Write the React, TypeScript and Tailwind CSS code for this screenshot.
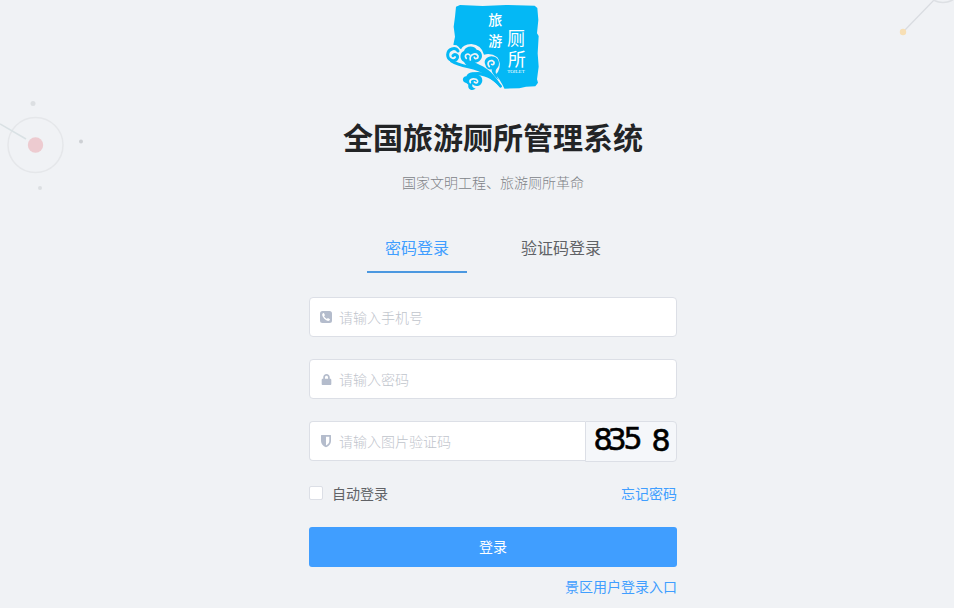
import { useState } from 'react';
import type { ReactNode } from 'react';
import { FaLock } from 'react-icons/fa';

type LoginMode = 'password' | 'code';

const TABS: { key: LoginMode; label: string }[] = [
  { key: 'password', label: '密码登录' },
  { key: 'code', label: '验证码登录' },
];

function Logo() {
  return (
    <svg viewBox="0 0 342 288" className="h-24 w-[114px]" role="img" aria-label="旅游厕所">
      <path
        fill="#04b8f5"
        d="M60 20 L72 15 L140 18 L210 15 L296 17 L304 24 L307 60 L303 100 L308 108 L305 160 L308 200 L303 238 L306 248 L298 259 L270 260 L250 265 L204 266 L150 200 L60 137 L52 134 L57 110 L53 80 L57 50 Z"
      />
      {/* gap between the seal and the clouds */}
      <path
        fill="#f0f2f5"
        d="M28 134 L62 136 Q72 142 74 150 Q80 134 106 132 Q136 134 144 164 Q166 158 184 172 Q198 190 186 216 L178 224 Q192 236 206 268 L140 282 L28 220 Z"
      />
      <g fill="#04b8f5">
        <path d="M84 186 C68 178 72 156 84 153 C88 137 114 135 122 149 C138 150 144 172 131 182 C124 190 110 188 106 182 C120 190 146 198 164 216 C180 232 192 248 196 262 C176 238 158 222 136 212 C112 204 92 202 84 186 Z" />
        <path d="M148 194 C140 176 160 164 175 170 C190 174 194 196 182 206 C177 212 178 220 188 240 C174 228 166 216 167 208 C158 210 150 204 148 194 Z" />
        <path d="M92 250 C76 246 78 230 91 229 C96 215 118 213 126 224 C144 230 142 252 128 257 C120 260 112 256 110 252 C106 260 112 264 119 265 C111 275 94 269 97 254 Z" />
        <path d="M104 220 C140 206 176 230 194 262 C172 240 152 228 128 226 Z" />
      </g>
      <g fill="none" stroke="#04b8f5" strokeLinecap="round">
        <path strokeWidth="9" d="M66 153 C58 140 36 146 35 164 C35 182 58 188 64 174 C67 165 56 160 51 167" />
        <path strokeWidth="8" d="M46 183 C80 204 118 198 146 219 C166 231 182 244 194 259" />
      </g>
      <g fill="none" stroke="#f0f2f5" strokeWidth="5" strokeLinecap="round">
        <path d="M91 175 C83 166 94 158 101 165" />
        <path d="M103 180 C99 164 119 156 126 168 C127 177 116 178 115 172" />
        <path d="M160 200 C152 190 158 180 169 182 C178 186 174 197 167 193" />
        <path d="M103 248 C99 240 108 234 120 238 C130 244 123 252 115 246" />
      </g>
      <g fill="#fff" textAnchor="middle" className="font-['Noto_Sans_CJK_SC',sans-serif]">
        <text x="178" y="74" fontSize="42" fontWeight="500">旅</text>
        <text x="178" y="138" fontSize="42" fontWeight="500">游</text>
        <text x="240" y="134" fontSize="54">厕</text>
        <text x="242" y="198" fontSize="54">所</text>
      </g>
      <text x="240" y="220" fontSize="15" fill="#fff" textAnchor="middle" className="font-['Liberation_Serif',serif]">
        TOILET
      </text>
    </svg>
  );
}

function Backdrop() {
  return (
    <div className="pointer-events-none absolute inset-0 flex items-start justify-between" aria-hidden="true">
      <svg viewBox="0 0 100 200" className="h-[200px] w-[100px]">
        <circle cx="35.500" cy="145" r="27.500" fill="none" stroke="#e5e7ea" strokeWidth="1.500" />
        <path d="M0 124 L26 139" stroke="#d9e1e4" strokeWidth="1.500" />
        <circle cx="35.500" cy="145" r="7.700" fill="#edcbd0" />
        <circle cx="33" cy="103.500" r="2.500" fill="#dcdfe2" />
        <circle cx="81" cy="141.500" r="2" fill="#cdd0d4" />
        <circle cx="40" cy="188" r="2" fill="#dcdfe2" />
      </svg>
      <svg viewBox="0 0 74 50" className="h-[50px] w-[74px]">
        <path d="M24 31 L54 0" stroke="#d9dce1" strokeWidth="1.200" />
        <circle cx="63" cy="-16" r="18.500" fill="none" stroke="#dde0e4" strokeWidth="1.500" />
        <circle cx="23" cy="32" r="3.200" fill="#f7dfb5" />
      </svg>
    </div>
  );
}

function PhoneIcon() {
  return (
    <svg viewBox="0 0 14 14" className="size-3.5">
      <rect x="1" y="1" width="12" height="12" rx="2.500" fill="currentColor" />
      <path
        fill="#fff"
        d="M3.200 4.200 Q3.800 3 4.900 3 L6 5.200 L5 6.200 Q6 8 7.900 9 L8.900 8 L11 9.200 Q11 10.300 9.800 10.800 Q7.800 11.300 5.200 8.800 Q2.700 6.200 3.200 4.200 Z"
      />
    </svg>
  );
}

function ShieldIcon() {
  return (
    <svg viewBox="0 0 12 14" className="h-3.5 w-3" fill="currentColor">
      <path
        fillRule="evenodd"
        d="M1.500 1 H10.500 Q11 1 11 1.500 V7 C11 10 9 12 6 13.300 C3 12 1 10 1 7 V1.500 Q1 1 1.500 1 Z M6 2.700 V11.400 C8.200 10.200 9.300 8.900 9.300 7 V2.700 Z"
      />
    </svg>
  );
}

interface FieldProps {
  id: string;
  label: string;
  icon: ReactNode;
  type?: string;
  attached?: boolean;
}

function Field({ id, label, icon, type = 'text', attached = false }: FieldProps) {
  return (
    <div
      className={`flex h-10 min-w-0 flex-1 items-center border border-[#dcdfe6] bg-white pl-[9px] ${
        attached ? 'rounded-l border-r-0' : 'rounded'
      }`}
    >
      <label htmlFor={id} aria-label={label} className="flex w-[14px] justify-center text-[#b4bccc]">
        {icon}
      </label>
      <input
        id={id}
        type={type}
        placeholder={label}
        className="ml-[6px] min-w-0 flex-1 text-sm font-light text-[#606266] outline-none placeholder:text-[#c0c4cc]"
      />
    </div>
  );
}

function Captcha() {
  return (
    <button
      type="button"
      aria-label="刷新验证码"
      className="h-[41px] w-[92px] shrink-0 overflow-hidden rounded-r border border-[#dcdfe6] bg-[#f5f7fa] px-[5px]"
    >
      <svg viewBox="0 0 80 39" className="h-[39px] w-20" fontSize="30" textAnchor="middle">
        <g stroke="#000" strokeWidth="0.600" className="font-['DejaVu_Sans',sans-serif]">
          <text x="12" y="28">8</text>
          <text x="26" y="28">3</text>
          <text x="42" y="27">5</text>
          <text x="70" y="29">8</text>
        </g>
      </svg>
    </button>
  );
}

export default function App() {
  const [mode, setMode] = useState<LoginMode>('password');

  return (
    <div className="relative min-h-screen overflow-hidden bg-[#f0f2f5] font-['Noto_Sans_CJK_SC',sans-serif]">
      <Backdrop />
      <main className="relative flex flex-col items-center pb-3 pl-8">
        <Logo />
        <h1 className="mt-5 text-[30px] leading-10 font-bold text-[#222426]">全国旅游厕所管理系统</h1>
        <p className="mt-4 text-sm leading-5 font-light text-[#808388]">国家文明工程、旅游厕所革命</p>

        <form className="mt-9 w-full max-w-[368px]" onSubmit={e => e.preventDefault()}>
          <div role="tablist" className="flex justify-center gap-11 pr-2">
            {TABS.map(tab => (
              <button
                key={tab.key}
                type="button"
                role="tab"
                aria-selected={mode === tab.key}
                onClick={() => setMode(tab.key)}
                className={`h-[45px] w-[100px] border-b-2 pb-[6px] text-base leading-9 ${
                  mode === tab.key ? 'border-[#4b98e0] text-[#409eff]' : 'border-transparent text-[#606266]'
                }`}
              >
                {tab.label}
              </button>
            ))}
          </div>

          <div className="mt-6 flex flex-col gap-[22px]">
            <div className="flex">
              <Field id="phone" label="请输入手机号" icon={<PhoneIcon />} />
            </div>
            <div className="flex">
              <Field id="password" label="请输入密码" type="password" icon={<FaLock size={11} />} />
            </div>
            <div className="flex h-10">
              <Field id="captcha" label="请输入图片验证码" icon={<ShieldIcon />} attached />
              <Captcha />
            </div>

            <div className="flex h-5 items-center justify-between text-sm">
              <label className="flex items-center gap-[9px] text-[#606266]">
                <input
                  type="checkbox"
                  className="size-[14px] appearance-none rounded-xs border border-[#dcdfe6] bg-white checked:bg-[#409eff]"
                />
                自动登录
              </label>
              <a href="#forgot" className="text-[#409eff]">忘记密码</a>
            </div>

            <button type="submit" className="mt-[2px] h-10 w-full rounded-[3px] bg-[#409eff] pb-[2px] text-sm text-white">
              登录
            </button>
          </div>

          <div className="mt-[9px] text-right text-sm leading-5">
            <a href="#scenic" className="text-[#409eff]">景区用户登录入口</a>
          </div>
        </form>
      </main>
    </div>
  );
}
